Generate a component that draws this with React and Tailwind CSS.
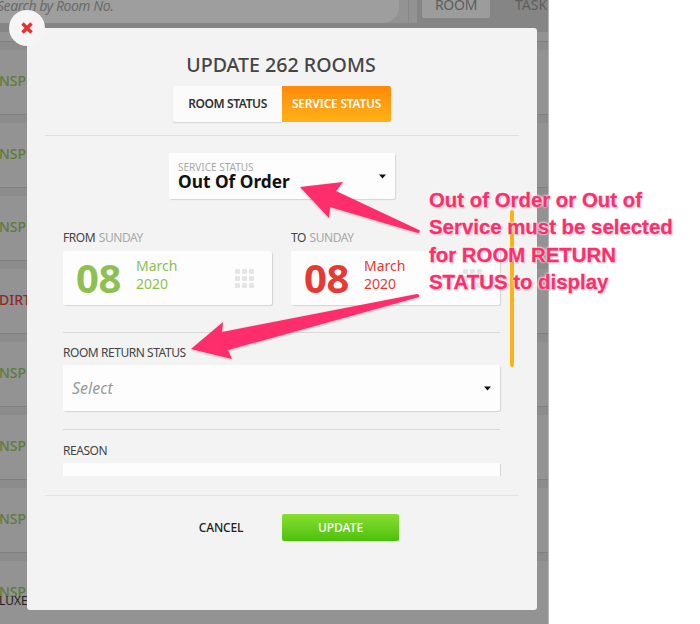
import React from "react";

const rows = [
  { label: "NSP", color: "text-[#5c7c3a]" },
  { label: "NSP", color: "text-[#5c7c3a]" },
  { label: "NSP", color: "text-[#5c7c3a]" },
  { label: "DIRT", color: "text-[#8c2a2a]" },
  { label: "NSP", color: "text-[#5c7c3a]" },
  { label: "NSP", color: "text-[#5c7c3a]" },
  { label: "NSP", color: "text-[#5c7c3a]" },
  { label: "NSP", color: "text-[#5c7c3a]", extra: "LUXE" },
];

const Caret = () => (
  <svg width="7" height="5" viewBox="0 0 7 5" className="shrink-0">
    <path d="M0 0.5h7L3.5 4.5z" fill="#111" />
  </svg>
);

const GridIcon = () => (
  <svg width="19" height="19" viewBox="0 0 19 19" className="shrink-0">
    {[0, 7, 14].map((y) =>
      [0, 7, 14].map((x) => (
        <rect key={`${x}-${y}`} x={x} y={y} width="5" height="5" rx="1" fill="#e5e5e5" />
      ))
    )}
  </svg>
);

const DateCard = ({ label, color }) => (
  <div className="w-[209px]">
    <p className="h-[16px] mb-[5px] text-[12px] tracking-[-0.45px] [word-spacing:1px] leading-[16px] text-[#444]">
      {label} <span className="text-[#a8a8a8]">SUNDAY</span>
    </p>
    <div className="h-[54px] bg-[#fdfdfd] rounded-[2px] shadow-[1px_1px_1px_#d4d4d4] flex items-center pl-[13px] pr-[18px]">
      <span className={`w-[60px] text-[40px] leading-none font-bold tracking-[-0.5px] ${color}`}>08</span>
      <div className={`flex-1 -mt-[6px] text-[14px] leading-[18px] ${color}`}>
        <p>March</p>
        <p>2020</p>
      </div>
      <GridIcon />
    </div>
  </div>
);

const Background = () => (
  <div className="w-[549px] h-[624px] bg-[#939393] border-r border-[#b5b5b5] overflow-hidden">
    <div className="h-[23px] flex">
      <div className="w-[402px] h-[23px] rounded-br-[16px] bg-[#9e9e9e] text-[#6b6b6b] text-[14px] tracking-[-0.45px] italic leading-[12px] -ml-[3px]">
        Search by Room No.
      </div>
      <div className="ml-[9px] w-[1px] bg-[#878787]" />
      <div className="ml-[8px] flex-1 h-[23px] bg-[#858585] pl-[5px] flex gap-[25px] text-[14px] text-[#5e5e5e]">
        <div className="w-[68px] h-[18px] rounded-b-[2px] bg-[#9c9c9c] text-center tracking-[-0.3px] leading-[10px]">ROOM</div>
        <span className="leading-[10px]">TASK</span>
      </div>
    </div>
    <div className="h-[9px] bg-[#858585]" />
    <div className="h-[9px]" />
    {rows.map((row, i) => (
      <div key={i} className="h-[73px] border-t border-[#808080] relative">
        <div className="h-[8px] bg-[#8c8c8c]" />
        <p className={`-ml-[1px] mt-[23px] text-[14px] font-medium leading-[16px] ${row.color}`}>{row.label}</p>
        {row.extra && <p className="-ml-[1px] -mt-[5px] text-[12px] leading-[12px] text-[#222]">{row.extra}</p>}
      </div>
    ))}
  </div>
);

export default function App() {
  return (
    <div className="relative w-[700px] h-[624px] bg-white overflow-hidden font-['Noto_Sans',sans-serif]">
      <Background />

      {/* Modal */}
      <div className="absolute left-[27px] top-[28px] w-[510px] h-[582px] bg-[#f3f3f3] rounded-[3px] flex flex-col">
        <h1 className="h-[58px] pt-[22px] pr-[2px] text-center text-[19.6px] leading-[30px] font-medium text-[#454545]">
          UPDATE 262 ROOMS
        </h1>

        <div className="flex justify-center">
          <div className="w-[109px] h-[36px] bg-[#fbfbfb] rounded-l-[2px] shadow-[0_1px_1px_#d4d4d4] text-center text-[12px] tracking-[-0.4px] leading-[36px] font-semibold text-[#333]">
            ROOM STATUS
          </div>
          <div className="w-[109px] h-[36px] bg-gradient-to-b from-[#ff880b] to-[#ffb217] rounded-r-[2px] text-center text-[12px] tracking-[-0.25px] leading-[36px] font-semibold text-white">
            SERVICE STATUS
          </div>
        </div>

        <div className="mt-[13px] mx-[18px] h-[1px] bg-[#dfdfdf]" />

        <div className="h-[340px] pl-[36px] pr-[37px] overflow-hidden">
          <div className="mt-[17px] ml-[106px] w-[226px] h-[46px] bg-[#fdfdfd] rounded-[2px] shadow-[1px_1px_1px_#d4d4d4] flex items-center justify-between pl-[9px] pr-[9px]">
            <div className="pt-[2px]">
              <p className="text-[10px] leading-[10px] text-[#a8a8a8]">SERVICE STATUS</p>
              <p className="text-[17.3px] leading-[20px] font-bold text-[#111]">Out Of Order</p>
            </div>
            <Caret />
          </div>

          <div className="mt-[31px] flex justify-between">
            <DateCard label="FROM" color="text-[#8cc152]" />
            <DateCard label="TO" color="text-[#e53935]" />
          </div>

          <div className="mt-[27px] h-[1px] bg-[#d9d9d9]" />
          <p className="mt-[12px] h-[16px] mb-[4px] text-[12px] tracking-[-0.45px] leading-[16px] text-[#444]">ROOM RETURN STATUS</p>
          <div className="h-[46px] bg-[#fdfdfd] rounded-[2px] shadow-[1px_1px_1px_#d4d4d4] flex items-center justify-between pl-[9px] pr-[9px]">
            <span className="text-[16px] italic text-[#9a9a9a]">Select</span>
            <Caret />
          </div>

          <div className="mt-[18px] h-[1px] bg-[#d9d9d9]" />
          <p className="mt-[13px] h-[16px] mb-[4px] text-[12px] tracking-[-0.45px] leading-[16px] text-[#444]">REASON</p>
          <div className="h-[46px] bg-[#fdfdfd] shadow-[1px_1px_0_#d4d4d4]" />
        </div>

        <div className="mt-[19px] mx-[18px] h-[1px] bg-[#e2e2e2]" />

        <div className="mt-[18px] flex items-center">
          <button className="ml-[155px] w-[78px] text-center text-[12px] tracking-[-0.2px] font-medium text-[#222]">CANCEL</button>
          <button className="ml-[22px] w-[117px] h-[27px] bg-gradient-to-b from-[#88de2e] to-[#4bc10b] rounded-[2px] text-[12px] font-medium text-white">
            UPDATE
          </button>
        </div>

        {/* scrollbar */}
        <div className="absolute left-[483px] top-[182px] w-[4px] h-[157px] rounded-full bg-[#fdb213]" />
      </div>

      {/* Close button */}
      <div className="absolute left-[9px] top-[10px] w-[36px] h-[36px] rounded-full bg-[#f5f5f5] flex items-center justify-center">
        <svg width="12" height="12" viewBox="0 0 12 12">
          <path d="M1.5 1.5l9 9M10.5 1.5l-9 9" stroke="#ea2c2c" strokeWidth="3.4" />
        </svg>
      </div>

      {/* Annotation arrows */}
      <svg
        width="700"
        height="624"
        viewBox="0 0 700 624"
        className="absolute left-0 top-0 drop-shadow-[0_1px_1px_rgba(0,0,0,0.25)]"
      >
        <path
          d="M300 187L343 182L336 191L419 230Q421 232 418 233L330 207L329 218Z"
          fill="#ff2d6c"
        />
        <path
          d="M191 349L223 322L222 332L417 294Q420 294 419 297L228 350L232 359Z"
          fill="#ff2d6c"
        />
      </svg>

      <div className="absolute left-[429px] top-[187px] font-['Liberation_Sans',Arial,sans-serif] font-bold text-[20.4px] leading-[27.3px] text-[#ff2d6c] whitespace-nowrap [-webkit-text-stroke:0.3px_#ff2d6c] [text-shadow:0_0_2px_#fff,0_0_2px_#fff,0_0_3px_#fff,1px_1px_2px_rgba(0,0,0,0.35)]">
        <p>Out of Order or Out of</p>
        <p>Service must be selected</p>
        <p>for ROOM RETURN</p>
        <p>STATUS to display</p>
      </div>
    </div>
  );
}
